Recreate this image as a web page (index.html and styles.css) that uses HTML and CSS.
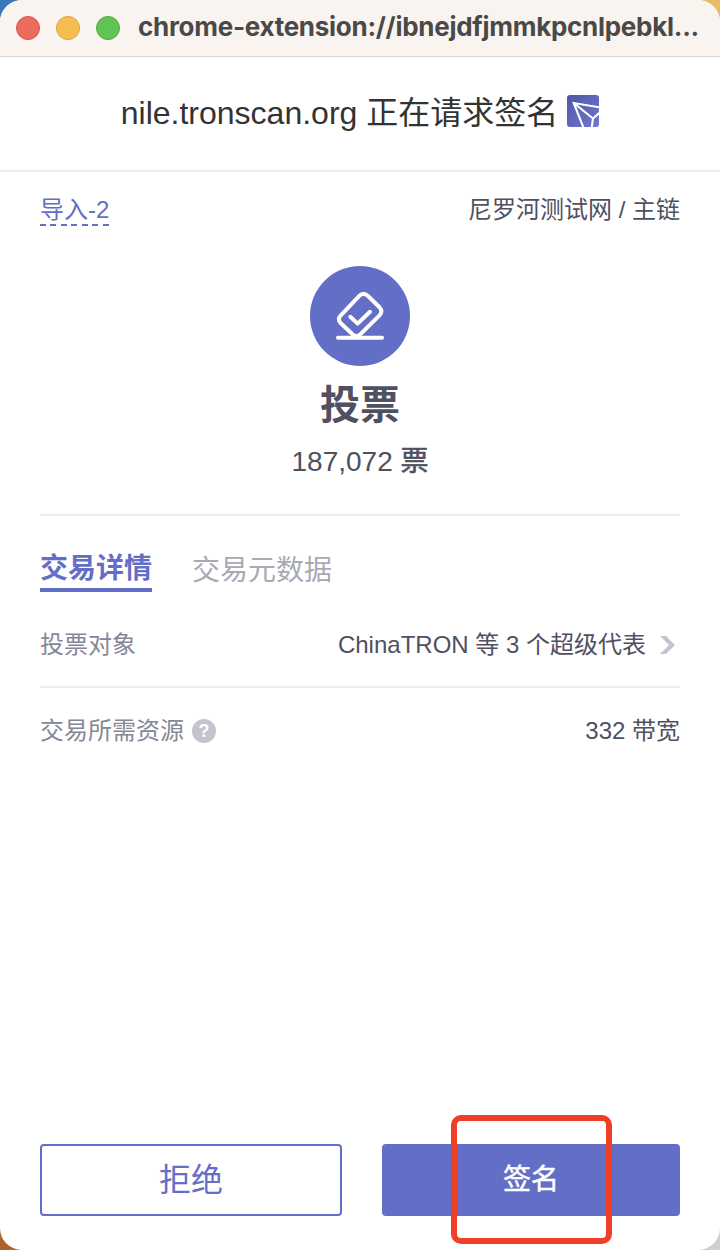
FILE: index.html
```html
<!DOCTYPE html>
<html lang="zh-CN">
<head>
<meta charset="utf-8">
<title>签名请求</title>
<link rel="stylesheet" href="styles.css">
</head>
<body>
<div class="window">
  <div class="titlebar">
    <span class="light light-close"></span>
    <span class="light light-min"></span>
    <span class="light light-max"></span>
    <span class="titlebar-text">chrome-extension://ibnejdfjmmkpcnlpebkl...</span>
  </div>
  <header class="header">
    <h1 class="header-title">nile.tronscan.org 正在请求签名</h1>
    <svg class="site-icon" viewBox="0 0 32 32">
      <defs>
        <linearGradient id="site" x1="0" y1="0" x2="1" y2="1"><stop offset="0" stop-color="#5157a5"/><stop offset="1" stop-color="#7077d0"/></linearGradient>
        <clipPath id="site-clip"><rect width="32" height="32" rx="3"/></clipPath>
      </defs>
      <rect width="32" height="32" rx="3" fill="url(#site)"/>
      <g clip-path="url(#site-clip)" fill="none" stroke="#fff" stroke-width="2.1">
        <path d="M34 12.6 L6.7 8 L17 34"/>
        <path d="M6.7 8 L26 23.5 L34 16.5 M26 23.5 L24.5 34"/>
      </g>
    </svg>
  </header>
  <main class="content">
    <div class="account-row">
      <span class="account">导入-2</span>
      <span class="network">尼罗河测试网 / 主链</span>
    </div>
    <section class="summary">
      <div class="vote-icon">
        <svg class="vote-svg" viewBox="0 0 100 100" fill="none" stroke="#fff" stroke-width="4" stroke-linecap="round" stroke-linejoin="round">
          <path d="M28 71.8H72"/>
          <path d="M42.5 68.2L30.8 57.3Q27 53.3 30.8 49.3L49.3 29.8Q53.5 26 57.7 29.8L69.5 41.3Q73.3 45.3 69.5 49.3L50.5 68.2Q46.5 71.8 42.5 68.2Z"/>
          <path d="M40.3 50.8L47.6 57.6L60 45.8"/>
        </svg>
      </div>
      <h2 class="summary-title">投票</h2>
      <p class="summary-amount">187,072 <span class="unit">票</span></p>
    </section>
    <nav class="tabs">
      <span class="tab tab-active">交易详情</span>
      <span class="tab">交易元数据</span>
    </nav>
    <div class="row row-target">
      <span class="label">投票对象</span>
      <span class="value">ChinaTRON 等 3 个超级代表
        <svg class="chevron" viewBox="0 0 16 18"><path d="M0 0H6L15 9L6 18H0L9 9Z" fill="#c3c4cd"/></svg>
      </span>
    </div>
    <div class="row row-resource">
      <span class="label">交易所需资源<span class="help">?</span></span>
      <span class="value">332 带宽</span>
    </div>
  </main>
  <footer class="actions">
    <button class="button button-reject">拒绝</button>
    <button class="button button-sign">签名<span class="highlight"></span></button>
  </footer>
</div>
</body>
</html>
```
FILE: styles.css
```css
* { box-sizing: border-box; }
body {
  margin: 0;
  background: linear-gradient(90deg, #3a78b8 50%, #e7bc62 50%) top / 100% 56px no-repeat,
    linear-gradient(90deg, #b0622c 50%, #cfcfcf 50%);
  font-family: "Liberation Sans", "Noto Sans CJK SC", sans-serif;
  color: #4f5062;
}
h1, h2, p { margin: 0; font-weight: 400; }
.window {
  display: flex;
  flex-direction: column;
  width: 720px;
  height: 1250px;
  border-radius: 22px;
  overflow: hidden;
  background: #fff;
}
.titlebar {
  display: flex;
  align-items: center;
  height: 57px;
  padding: 0 0 1px 16px;
  gap: 16px;
  background: #faf4f0;
  border-bottom: 1px solid #d8d5d3;
}
.light { width: 24px; height: 24px; border-radius: 50%; border: 1px solid; }
.light-close { background: #ed6a5f; border-color: #d75549; }
.light-min { background: #f5bf4f; border-color: #d8a13d; }
.light-max { background: #61c454; border-color: #50a73f; }
.titlebar-text {
  margin-left: 2px;
  padding-bottom: 2px;
  white-space: nowrap;
  font: 700 26px/32px Inter, sans-serif;
  letter-spacing: -0.28px;
  color: #4b4947;
}
.header {
  display: flex;
  justify-content: center;
  align-items: center;
  gap: 9px;
  height: 115px;
  padding-bottom: 6px;
  border-bottom: 2px solid #eee;
}
.header-title { padding-top: 4px; font-size: 32px; line-height: 44px; color: #333; }
.site-icon { width: 32px; height: 32px; }
.content { flex: 1; padding: 0 40px; font-size: 24px; }
.account-row {
  display: flex;
  justify-content: space-between;
  align-items: flex-start;
  padding-top: 22px;
  line-height: 32px;
}
.account {
  height: 32px;
  color: #636ec6;
  background: repeating-linear-gradient(90deg, #636ec6 0 6px, transparent 6px 10.5px) bottom / 100% 2px no-repeat;
}
.summary {
  display: flex;
  flex-direction: column;
  align-items: center;
  height: 290px;
  padding-top: 40px;
  border-bottom: 2px solid #eee;
}
.vote-icon { width: 100px; height: 100px; border-radius: 50%; background: #636ec6; }
.vote-svg { display: block; width: 100%; }
.summary-title { margin-top: 11px; font-size: 40px; line-height: 56px; font-weight: 700; }
.summary-amount { margin-top: 9px; font-size: 28px; line-height: 40px; }
.unit { -webkit-text-stroke: 0.6px; }
.tabs { display: flex; gap: 40px; padding-top: 32px; }
.tab { height: 44px; padding-top: 3px; font-size: 28px; line-height: 40px; color: #a8a9b2; }
.tab-active { padding-top: 1px; line-height: 39px; font-weight: 700; color: #636ec6; border-bottom: 4px solid #636ec6; }
.row { display: flex; justify-content: space-between; line-height: 36px; }
.row-target { height: 96px; padding-top: 35px; border-bottom: 2px solid #eee; }
.row-resource { padding-top: 25px; }
.label { display: flex; align-items: center; height: 36px; color: #858796; }
.value { display: flex; align-items: center; height: 36px; }
.chevron { width: 16px; height: 18px; margin: 0 4px 0 14px; }
.help {
  width: 24px;
  height: 24px;
  margin-left: 8px;
  border-radius: 50%;
  background: #c3c4cd;
  color: #fff;
  font-size: 18px;
  line-height: 25px;
  font-weight: 700;
  text-align: center;
}
.actions { display: flex; gap: 40px; padding: 0 40px 34px; }
.button {
  height: 72px;
  padding: 0 0 6px;
  border: 2px solid #636ec6;
  border-radius: 4px;
  font-family: inherit;
}
.button-reject { width: 302px; background: #fff; color: #636ec6; font-size: 32px; }
.button-sign {
  position: relative;
  width: 298px;
  background: #636ec6;
  color: #fff;
  font-size: 28px;
  -webkit-text-stroke: 0.5px #fff;
}
.highlight {
  position: absolute;
  left: 67px;
  top: -31px;
  width: 161px;
  height: 129px;
  border: 6px solid #ed4027;
  border-radius: 10px;
}
```
